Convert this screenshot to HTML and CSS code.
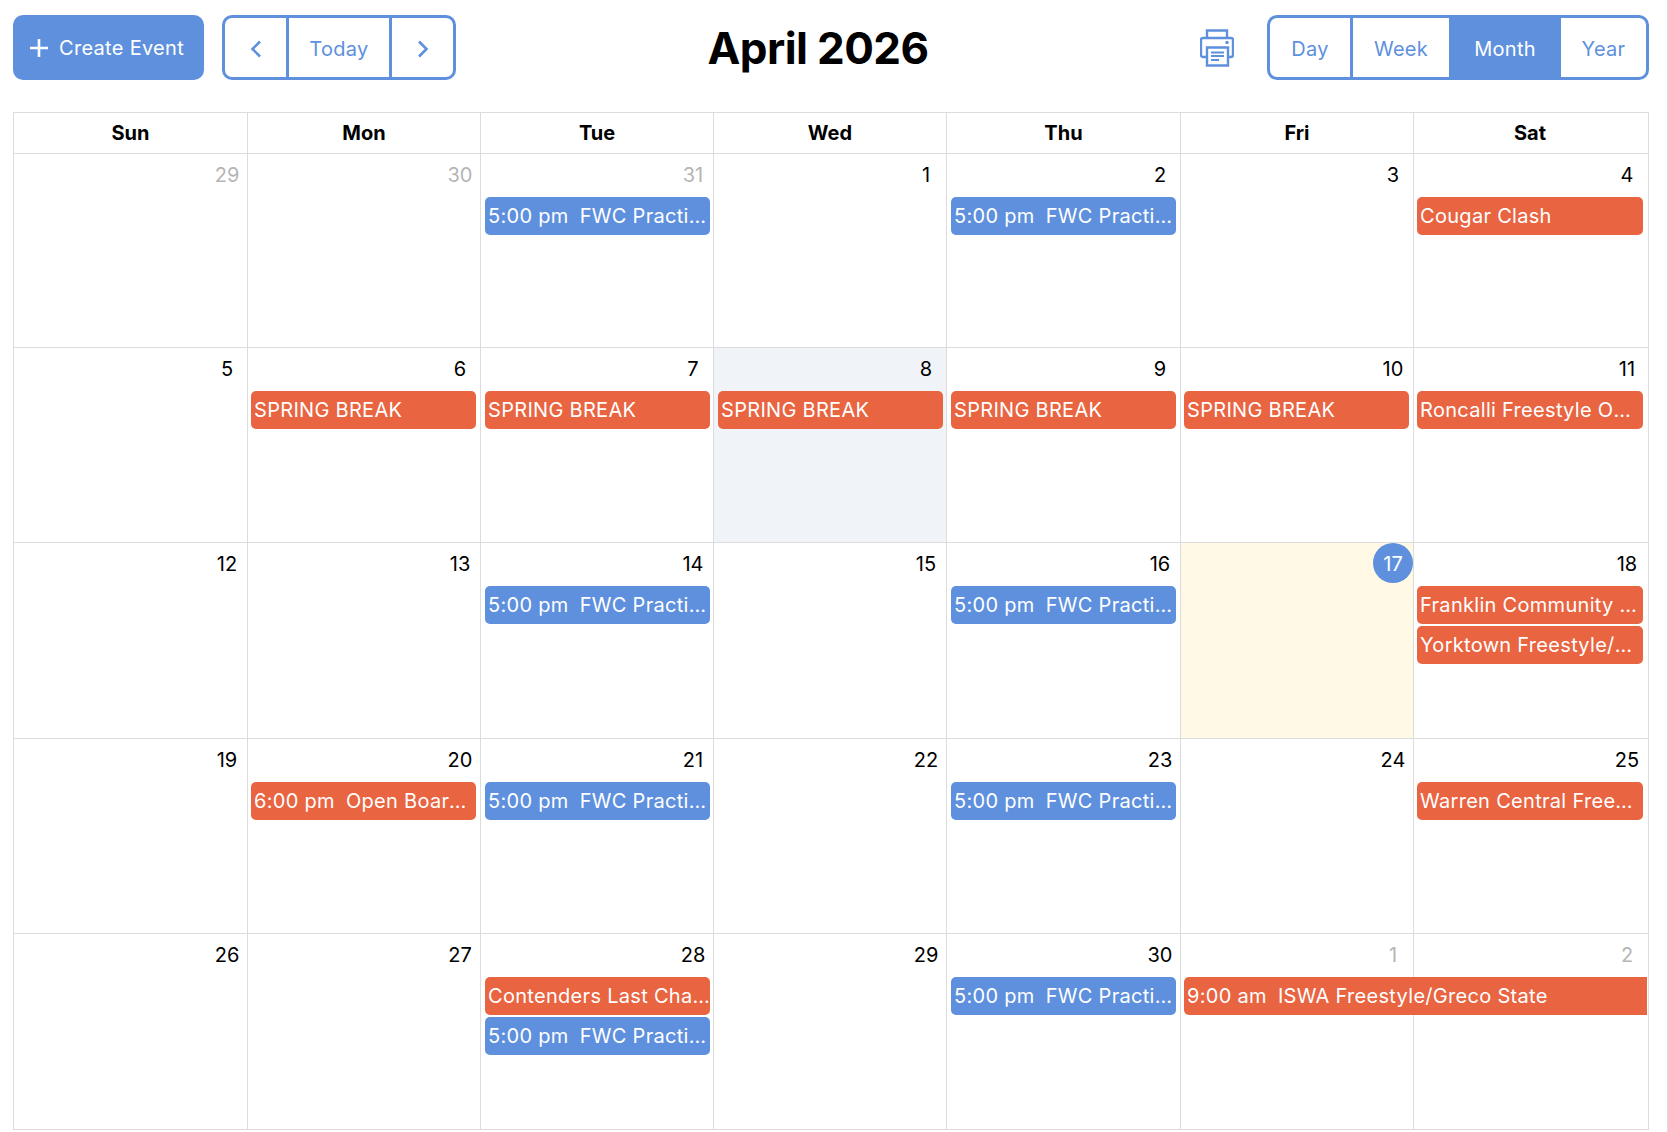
FILE: index.html
```html
<!DOCTYPE html>
<html lang="en">
<head>
<meta charset="utf-8">
<title>April 2026</title>
<link rel="stylesheet" href="styles.css">
</head>
<body>
<header class="toolbar">
  <div class="toolbar-left">
    <button class="create"><svg class="plus" viewBox="0 0 18 18"><path d="M9 0v18M0 9h18"/></svg>Create Event</button>
    <div class="group nav">
      <button class="seg arrow"><svg class="chev" viewBox="0 0 12 18"><path d="M10 1.5 2.5 9l7.5 7.5"/></svg></button>
      <button class="seg today">Today</button>
      <button class="seg arrow last"><svg class="chev" viewBox="0 0 12 18"><path d="M2 1.5 9.5 9 2 16.5"/></svg></button>
    </div>
  </div>
  <h1 class="title">April 2026</h1>
  <div class="toolbar-right">
    <svg class="printer" viewBox="0 0 34 38"><path d="M7 9V1.5h20V9M7 28H3a2 2 0 0 1-2-2V11a2 2 0 0 1 2-2h28a2 2 0 0 1 2 2v15a2 2 0 0 1-2 2h-4"/><path d="M7 18.5h21v18H7z"/><path class="paper" d="M11 23.5h13M11 27h13M11 31h8"/><circle cx="27" cy="13.5" r="1.7"/></svg>
    <div class="group views">
      <button class="seg v-day">Day</button>
      <button class="seg v-week">Week</button>
      <button class="seg v-month active">Month</button>
      <button class="seg v-year last">Year</button>
    </div>
  </div>
</header>
<main class="calendar">
  <div class="head">Sun</div><div class="head">Mon</div><div class="head">Tue</div><div class="head">Wed</div><div class="head">Thu</div><div class="head">Fri</div><div class="head">Sat</div>

  <div class="cell"><div class="num out">29</div></div>
  <div class="cell"><div class="num out">30</div></div>
  <div class="cell"><div class="num out">31</div><div class="ev blue"><span class="t">5:00 pm</span>FWC Practice</div></div>
  <div class="cell"><div class="num">1</div></div>
  <div class="cell"><div class="num">2</div><div class="ev blue"><span class="t">5:00 pm</span>FWC Practice</div></div>
  <div class="cell"><div class="num">3</div></div>
  <div class="cell"><div class="num">4</div><div class="ev red">Cougar Clash</div></div>

  <div class="cell"><div class="num">5</div></div>
  <div class="cell"><div class="num">6</div><div class="ev red">SPRING BREAK</div></div>
  <div class="cell"><div class="num">7</div><div class="ev red">SPRING BREAK</div></div>
  <div class="cell past"><div class="num">8</div><div class="ev red">SPRING BREAK</div></div>
  <div class="cell"><div class="num">9</div><div class="ev red">SPRING BREAK</div></div>
  <div class="cell"><div class="num">10</div><div class="ev red">SPRING BREAK</div></div>
  <div class="cell"><div class="num">11</div><div class="ev red">Roncalli Freestyle Open</div></div>

  <div class="cell"><div class="num">12</div></div>
  <div class="cell"><div class="num">13</div></div>
  <div class="cell"><div class="num">14</div><div class="ev blue"><span class="t">5:00 pm</span>FWC Practice</div></div>
  <div class="cell"><div class="num">15</div></div>
  <div class="cell"><div class="num">16</div><div class="ev blue"><span class="t">5:00 pm</span>FWC Practice</div></div>
  <div class="cell now"><div class="num badge">17</div></div>
  <div class="cell"><div class="num">18</div><div class="ev red">Franklin Community Tournament</div><div class="ev red">Yorktown Freestyle/Greco</div></div>

  <div class="cell"><div class="num">19</div></div>
  <div class="cell"><div class="num">20</div><div class="ev red"><span class="t">6:00 pm</span>Open Board Meeting</div></div>
  <div class="cell"><div class="num">21</div><div class="ev blue"><span class="t">5:00 pm</span>FWC Practice</div></div>
  <div class="cell"><div class="num">22</div></div>
  <div class="cell"><div class="num">23</div><div class="ev blue"><span class="t">5:00 pm</span>FWC Practice</div></div>
  <div class="cell"><div class="num">24</div></div>
  <div class="cell"><div class="num">25</div><div class="ev red">Warren Central Freestyle</div></div>

  <div class="cell"><div class="num">26</div></div>
  <div class="cell"><div class="num">27</div></div>
  <div class="cell"><div class="num">28</div><div class="ev red">Contenders Last Chance</div><div class="ev blue"><span class="t">5:00 pm</span>FWC Practice</div></div>
  <div class="cell"><div class="num">29</div></div>
  <div class="cell"><div class="num">30</div><div class="ev blue"><span class="t">5:00 pm</span>FWC Practice</div></div>
  <div class="cell"><div class="num out">1</div><div class="ev red span2"><span class="t">9:00 am</span>ISWA Freestyle/Greco State</div></div>
  <div class="cell"><div class="num out">2</div></div>
</main>
</body>
</html>
```
FILE: styles.css
```css
* { box-sizing: border-box; }
html, body { margin: 0; height: 100%; overflow: hidden; background: #fff; }
body {
  font-family: Inter, "Open Sans", sans-serif;
  font-size: 20px;
  letter-spacing: 0.3px;
  color: #000;
  padding: 15px 18px 0 13px;
  border-right: 1px solid #dcdcdc;
}
button { font: inherit; letter-spacing: inherit; background: none; border: 0; padding: 0; color: inherit; }
.toolbar {
  display: flex;
  justify-content: space-between;
  align-items: center;
  height: 65px;
  margin-bottom: 32px;
}
.toolbar-left { display: flex; gap: 18px; align-items: center; }
.toolbar-right { display: flex; gap: 33px; align-items: center; }
.create {
  display: flex; align-items: center; gap: 11px;
  width: 191px; height: 65px; padding-left: 17px;
  background: #5e90dd; color: #fff; border-radius: 10px;
}
.plus { width: 18px; height: 18px; fill: none; stroke: #fff; stroke-width: 2.6; }
.group {
  display: flex; height: 65px;
  border: 3px solid #5e90dd; border-radius: 10px; overflow: hidden;
  color: #5e90dd;
}
.seg { display: flex; align-items: center; justify-content: center; padding-top: 2px; border-right: 3px solid #5e90dd; }
.seg.last { border-right: 0; }
.arrow { width: 64px; }
.nav .last { width: 61px; }
.today { width: 103px; }
.chev { width: 12px; height: 18px; fill: none; stroke: #5e90dd; stroke-width: 2.6; }
.title { margin: 0 20px 0 0; font-size: 44px; font-weight: 700; letter-spacing: -0.6px; line-height: 1; }
.printer { width: 34px; height: 38px; fill: none; stroke: #5e90dd; stroke-width: 2.4; }
.printer .paper { stroke-width: 2; }
.printer circle { fill: #5e90dd; stroke: none; }
.views .v-day { width: 83px; }
.views .v-week { width: 96px; border-right: 0; }
.views .v-month { width: 112px; border-right: 0; }
.views .v-year { width: 85px; }
.active { background: #5e90dd; color: #fff; }
.calendar {
  display: grid;
  width: 1636px;
  grid-template-columns: 234px 233px 233px 233px 234px 233px 235px;
  grid-template-rows: 41px 194px 195px 196px 195px 196px;
  border-top: 1px solid #dcdcdc;
  border-right: 1px solid #dcdcdc;
}
.head {
  display: flex; align-items: center; justify-content: center;
  font-weight: 700;
  letter-spacing: 0;
  border-left: 1px solid #dcdcdc; border-bottom: 1px solid #dcdcdc;
}
.head:nth-child(7) { padding-right: 2px; }
.cell {
  border-left: 1px solid #dcdcdc; border-bottom: 1px solid #dcdcdc;
  padding: 0 3px 0 4px; min-width: 0;
}
.cell:nth-child(7n+2), .cell:nth-child(7n+6) { padding: 0 4px 0 3px; }
.cell:nth-child(7n+5) { padding: 0 4px 0 4px; }
.cell:nth-child(7n) { padding: 0 5px 0 3px; }
.num {
  display: flex; align-items: center; justify-content: center;
  width: 40px; height: 40px; margin: 0 -3px 3px auto;
  padding-top: 2px;
  letter-spacing: 0;
}
.cell:nth-child(7n+2) .num, .cell:nth-child(7n+5) .num, .cell:nth-child(7n+6) .num { margin-right: -4px; }
.cell:nth-child(7n) .num { margin-right: -4px; }
.out { color: #b5b5b5; }
.past { background: #f0f4f9; }
.now { background: #fff9e5; }
.badge { border-radius: 50%; background: #5e90dd; color: #fff; }
.ev {
  height: 38px; line-height: 39px; margin-bottom: 2px;
  padding: 0 0 0 3px; border-radius: 5px;
  color: #fff;
  white-space: nowrap; overflow: hidden; text-overflow: ellipsis;
}
.t { margin-right: 11px; }
.blue { background: #5e90dd; }
.red { background: #e96441; }
.span2 { position: relative; z-index: 1; width: calc(200% + 13px); border-radius: 5px 0 0 5px; }
```
